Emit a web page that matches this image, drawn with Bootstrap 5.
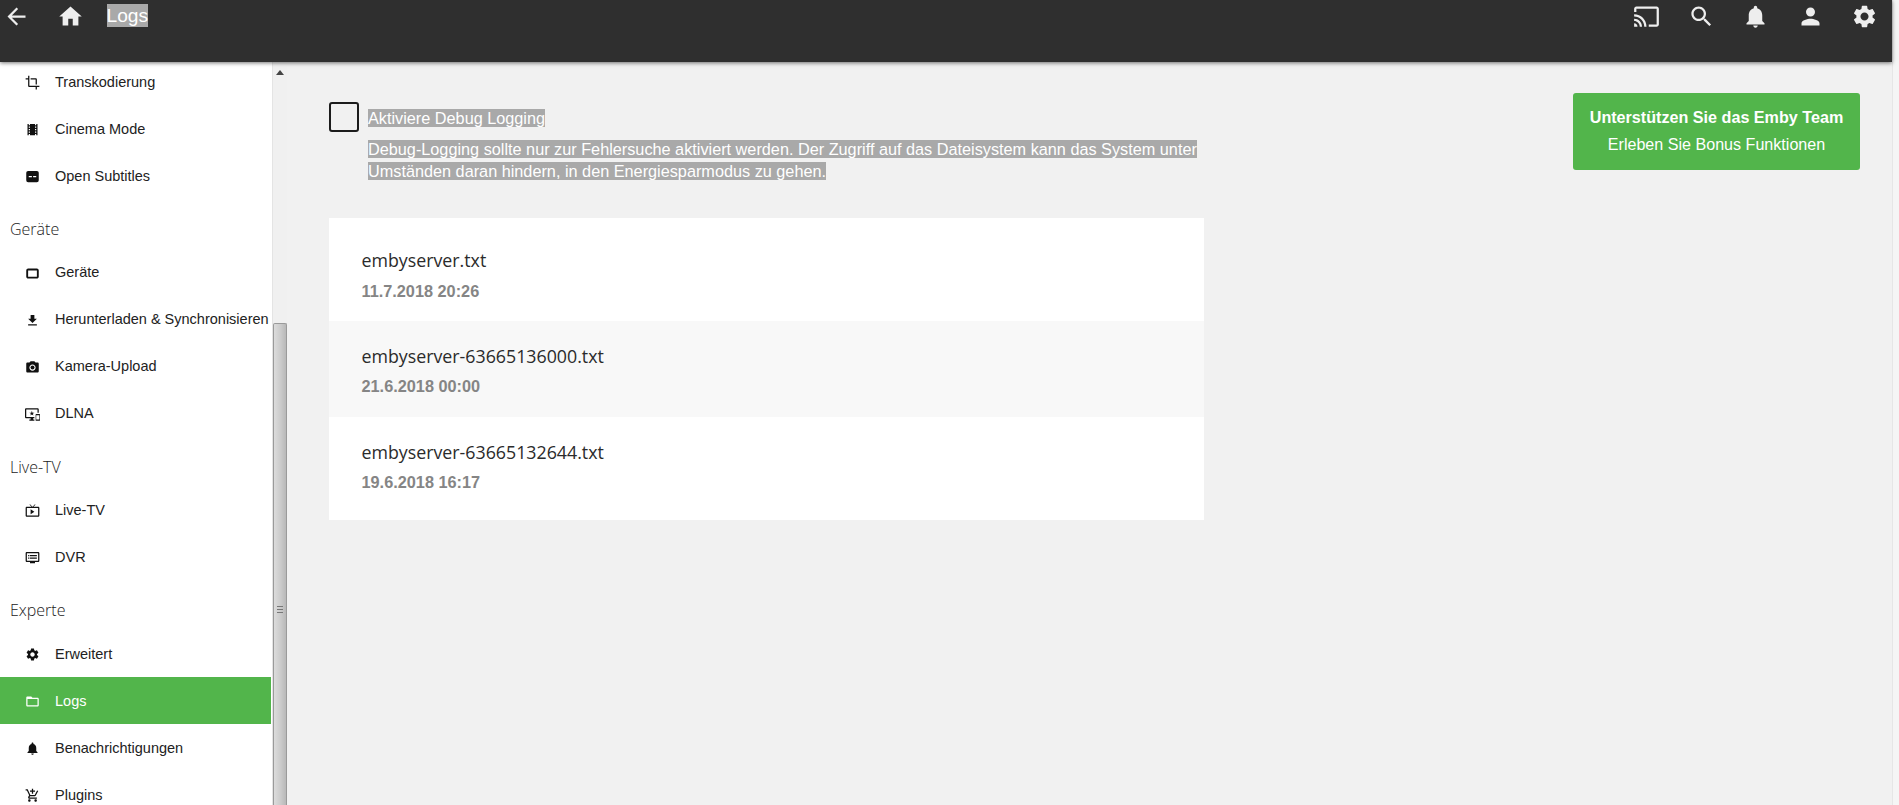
<!doctype html>
<html lang="de">
<head>
<meta charset="utf-8">
<title>Logs</title>
<link href="https://cdn.jsdelivr.net/npm/bootstrap@5.3.0/dist/css/bootstrap.min.css" rel="stylesheet">
<style>
html,body{height:100%;overflow:hidden}
body{background:#f1f1f1;font-family:"Liberation Sans",Arial,sans-serif;color:#222}
.page-shell{height:805px;width:1899px}
.page-col{width:1892px;min-width:1892px}
.edge-bar{width:7px;background:#f5f5f5;border-left:1px solid #e6e6e6}
.top-bar{height:62px;background:#2f2f2f;box-shadow:0 1px 4px rgba(0,0,0,.55);position:relative;z-index:3;color:#eee}
.top-btn{height:32px;width:54.5px;fill:#eee}
.top-btn svg{width:27px;height:27px}
.back-btn{width:33px}
.home-btn{margin-left:10px}
.home-btn svg{width:27px;height:27px}
.top-title{font-size:19.2px;line-height:23px;margin-top:4px;margin-left:9px;background:#a9a9a9;color:#fff;align-self:flex-start}
.side-panel{width:272px;background:#fff}
.side-inner{margin-top:-4px}
.side-item{height:47px;padding-left:24.5px;padding-top:2px;gap:15.5px;font-size:14.5px;color:#222;text-decoration:none}
.side-item svg{width:15px;height:15px;fill:#111;flex:none}
.side-item.is-active{background:#52b54b;color:#fff;width:271px}
.side-item.is-active svg{fill:#fff}
.side-head{font-family:"Open Sans",sans-serif;font-size:16px;color:#222;padding:19px 0 0 10px;margin:0;height:49.67px;line-height:22px;font-weight:300}
.sb-track{width:15px;background:#f0f0f0;border-left:1px solid #e4e4e4;position:relative}
.sb-arrow{width:0;height:0;border-left:4px solid transparent;border-right:4px solid transparent;border-bottom:5px solid #444;margin:8px auto 0}
.sb-thumb{position:absolute;left:0;right:0;top:261px;bottom:0;background:linear-gradient(90deg,#dcdcdc,#cbcbcb 55%,#b8b8b8);border:1px solid #9a9a9a;border-bottom:0;border-radius:2px 2px 0 0}
.sb-grip{position:absolute;left:3px;top:282px;width:6px;height:7px;border-top:1px solid #777;border-bottom:1px solid #777}
.sb-grip::after{content:"";display:block;margin-top:2px;border-top:1px solid #777}
.main-area{padding:31px 32px 0 42px}
.main-left{width:875px}
.check-box{width:30px;height:30px;border:2px solid #1c1c1c;border-radius:3px;flex:none;margin-top:9px;background:transparent;appearance:none;display:block}
.sel-text{background:#a9a9a9;color:#fff}
.check-text{margin-left:9px;padding-top:14px;padding-right:5px}
.check-label{font-size:16.25px;line-height:22px;margin-bottom:9px;display:block}
.check-desc{font-size:16.25px;line-height:22px;margin:0}
.file-list{margin-top:36px;background:#fff}
.file-row{padding:0 32.5px;display:flex;flex-direction:column;color:inherit;text-decoration:none}
.file-row.first{height:103px;padding-top:29px}
.file-row.alt{height:96px;padding-top:22px;background:#f8f8f8}
.file-row.last{height:103px;padding-top:22px}
.file-name{font-family:"Open Sans",sans-serif;font-size:17.8px;line-height:26px;color:#2b2b2b}
.file-date{font-size:16.3px;font-weight:700;line-height:20px;color:#858585;margin-top:7px}
.file-row.first .file-date{margin-top:8px}
.promo{width:287px;height:77px;background:#52b54b;border-radius:3px;color:#fff;text-decoration:none;padding-bottom:2px}
.promo b{font-size:16.15px;line-height:22px;margin-bottom:5px}
.promo span{font-size:16.1px;line-height:22px}
</style>
</head>
<body>
<div class="page-shell d-flex">
  <div class="page-col d-flex flex-column">
    <header class="top-bar d-flex align-items-start flex-shrink-0">
      <div class="top-btn back-btn d-flex align-items-center justify-content-center"><svg viewBox="0 0 24 24"><path d="M20 11H7.830l5.590-5.590L12 4l-8 8 8 8 1.410-1.410L7.830 13H20v-2z"/></svg></div>
      <div class="top-btn home-btn d-flex align-items-center justify-content-center"><svg viewBox="0 0 24 24"><path d="M10 20v-6h4v6h5v-8h3L12 3 2 12h3v8z"/></svg></div>
      <div class="top-title">Logs</div>
      <div class="ms-auto d-flex">
        <div class="top-btn d-flex align-items-center justify-content-center"><svg viewBox="0 0 24 24"><path d="M21 3H3c-1.100 0-2 .9-2 2v3h2V5h18v14h-7v2h7c1.100 0 2-.9 2-2V5c0-1.100-.9-2-2-2zM1 18v3h3c0-1.660-1.340-3-3-3zm0-4v2c2.760 0 5 2.240 5 5h2c0-3.870-3.130-7-7-7zm0-4v2c4.970 0 9 4.030 9 9h2c0-6.080-4.930-11-11-11z"/></svg></div>
        <div class="top-btn d-flex align-items-center justify-content-center"><svg viewBox="0 0 24 24"><path d="M15.500 14h-.79l-.28-.27C15.410 12.590 16 11.110 16 9.500 16 5.910 13.090 3 9.500 3S3 5.910 3 9.500 5.910 16 9.500 16c1.610 0 3.090-.59 4.230-1.570l.27.28v.79l5 4.990L20.490 19l-4.990-5zm-6 0C7.010 14 5 11.990 5 9.500S7.010 5 9.500 5 14 7.010 14 9.500 11.990 14 9.500 14z"/></svg></div>
        <div class="top-btn d-flex align-items-center justify-content-center"><svg viewBox="0 0 24 24"><path d="M12 22c1.100 0 2-.9 2-2h-4c0 1.100.89 2 2 2zm6-6v-5c0-3.070-1.640-5.640-4.500-6.320V4c0-.83-.67-1.500-1.500-1.500s-1.500.67-1.500 1.500v.68C7.630 5.360 6 7.920 6 11v5l-2 2v1h16v-1l-2-2z"/></svg></div>
        <div class="top-btn d-flex align-items-center justify-content-center"><svg viewBox="0 0 24 24"><path d="M12 12c2.210 0 4-1.790 4-4s-1.790-4-4-4-4 1.790-4 4 1.790 4 4 4zm0 2c-2.670 0-8 1.340-8 4v2h16v-2c0-2.660-5.330-4-8-4z"/></svg></div>
        <div class="top-btn d-flex align-items-center justify-content-center"><svg viewBox="0 0 24 24"><path d="M19.140 12.940c.04-.3.06-.61.06-.94 0-.32-.02-.64-.07-.94l2.030-1.580c.18-.14.23-.41.12-.61l-1.920-3.320c-.12-.22-.37-.29-.59-.22l-2.390.96c-.5-.38-1.030-.7-1.620-.94l-.36-2.540c-.04-.24-.24-.41-.48-.41h-3.840c-.24 0-.43.17-.47.41l-.36 2.540c-.59.24-1.130.57-1.620.94l-2.390-.96c-.22-.08-.47 0-.59.22L2.740 8.870c-.12.21-.08.47.12.61l2.030 1.580c-.05.3-.09.63-.09.94s.02.64.07.94l-2.030 1.580c-.18.14-.23.41-.12.61l1.920 3.320c.12.22.37.29.59.22l2.390-.96c.5.38 1.030.7 1.620.94l.36 2.540c.05.24.24.41.48.41h3.840c.24 0 .44-.17.47-.41l.36-2.540c.59-.24 1.130-.56 1.620-.94l2.390.96c.22.08.47 0 .59-.22l1.920-3.320c.12-.22.07-.47-.12-.61l-2.010-1.580zM12 15.600c-1.980 0-3.600-1.620-3.600-3.600s1.620-3.600 3.600-3.600 3.600 1.620 3.600 3.600-1.620 3.600-3.600 3.600z"/></svg></div>
      </div>
    </header>
    <div class="d-flex flex-grow-1 overflow-hidden">
      <nav class="side-panel flex-shrink-0 overflow-hidden">
        <div class="side-inner">
          <a class="side-item d-flex align-items-center" href="#"><svg viewBox="0 0 24 24"><path d="M17 15h2V7c0-1.100-.9-2-2-2H9v2h8v8zM7 17V1H5v4H1v2h4v10c0 1.100.9 2 2 2h10v4h2v-4h4v-2H7z"/></svg>Transkodierung</a>
          <a class="side-item d-flex align-items-center" href="#"><svg viewBox="0 0 24 24"><path d="M18 3v2h-2V3H8v2H6V3H4v18h2v-2h2v2h8v-2h2v2h2V3h-2zM8 17H6v-2h2v2zm0-4H6v-2h2v2zm0-4H6V7h2v2zm10 8h-2v-2h2v2zm0-4h-2v-2h2v2zm0-4h-2V7h2v2z"/></svg>Cinema Mode</a>
          <a class="side-item d-flex align-items-center" href="#"><svg viewBox="0 0 24 24"><path fill-rule="evenodd" d="M5 3h14a3 3 0 0 1 3 3v12a3 3 0 0 1-3 3H5a3 3 0 0 1-3-3V6a3 3 0 0 1 3-3zm1 8v2h5v-2H6zm7 0v2h5v-2h-5z"/></svg>Open Subtitles</a>
          <h2 class="side-head">Geräte</h2>
          <a class="side-item d-flex align-items-center" href="#"><svg viewBox="0 0 24 24"><path d="M19 4H5C3.500 4 2 5.500 2 7v10c0 1.500 1.500 3 3 3h14c1.500 0 3-1.500 3-3V7c0-1.500-1.500-3-3-3zm0 13H5V7h14v10z"/></svg>Geräte</a>
          <a class="side-item d-flex align-items-center" href="#"><svg viewBox="0 0 24 24"><path d="M19 9h-4V3H9v6H5l7 7 7-7zM5 18v2h14v-2H5z"/></svg>Herunterladen &amp; Synchronisieren</a>
          <a class="side-item d-flex align-items-center" href="#"><svg viewBox="0 0 24 24"><circle cx="12" cy="12" r="3.200"/><path d="M9 2L7.170 4H4c-1.100 0-2 .9-2 2v12c0 1.100.9 2 2 2h16c1.100 0 2-.9 2-2V6c0-1.100-.9-2-2-2h-3.170L15 2H9zm3 15c-2.760 0-5-2.240-5-5s2.240-5 5-5 5 2.240 5 5-2.240 5-5 5z"/></svg>Kamera-Upload</a>
          <a class="side-item d-flex align-items-center" href="#"><svg viewBox="0 0 24 24"><path d="M23 11.010L18 11c-.55 0-1 .45-1 1v9c0 .55.45 1 1 1h5c.55 0 1-.45 1-1v-9c0-.55-.45-.99-1-.99zM23 20h-5v-7h5v7zM20 2H2C.89 2 0 2.890 0 4v12c0 1.100.89 2 2 2h7v2H7v2h8v-2h-2v-2h2v-2H2V4h18v5h2V4c0-1.110-.9-2-2-2zm-8.030 7L11 6l-.97 3H7l2.470 1.760-.94 2.910 2.470-1.800 2.470 1.800-.94-2.910L15 9h-3.030z"/></svg>DLNA</a>
          <h2 class="side-head">Live-TV</h2>
          <a class="side-item d-flex align-items-center" href="#"><svg viewBox="0 0 24 24"><path d="M21 6h-7.590l3.290-3.290L16 2l-4 4-4-4-.71.71L10.590 6H3c-1.100 0-2 .89-2 2v12c0 1.100.9 2 2 2h18c1.100 0 2-.9 2-2V8c0-1.110-.9-2-2-2zm0 14H3V8h18v12zM9 10v8l6-4z"/></svg>Live-TV</a>
          <a class="side-item d-flex align-items-center" href="#"><svg viewBox="0 0 24 24"><path d="M21 3H3c-1.100 0-2 .9-2 2v12c0 1.100.9 2 2 2h5v2h8v-2h5c1.100 0 1.990-.9 1.990-2L23 5c0-1.100-.9-2-2-2zm0 14H3V5h18v12zm-2-9H8v2h11V8zm0 4H8v2h11v-2zM7 8H5v2h2V8zm0 4H5v2h2v-2z"/></svg>DVR</a>
          <h2 class="side-head">Experte</h2>
          <a class="side-item d-flex align-items-center" href="#"><svg viewBox="0 0 24 24"><path d="M19.140 12.940c.04-.3.06-.61.06-.94 0-.32-.02-.64-.07-.94l2.030-1.580c.18-.14.23-.41.12-.61l-1.920-3.320c-.12-.22-.37-.29-.59-.22l-2.390.96c-.5-.38-1.030-.7-1.620-.94l-.36-2.540c-.04-.24-.24-.41-.48-.41h-3.840c-.24 0-.43.17-.47.41l-.36 2.540c-.59.24-1.130.57-1.620.94l-2.390-.96c-.22-.08-.47 0-.59.22L2.740 8.870c-.12.21-.08.47.12.61l2.030 1.580c-.05.3-.09.63-.09.94s.02.64.07.94l-2.030 1.580c-.18.14-.23.41-.12.61l1.920 3.320c.12.22.37.29.59.22l2.390-.96c.5.38 1.030.7 1.620.94l.36 2.540c.05.24.24.41.48.41h3.840c.24 0 .44-.17.47-.41l.36-2.540c.59-.24 1.130-.56 1.620-.94l2.390.96c.22.08.47 0 .59-.22l1.920-3.320c.12-.22.07-.47-.12-.61l-2.010-1.580zM12 15.600c-1.980 0-3.600-1.620-3.600-3.600s1.620-3.600 3.600-3.600 3.600 1.620 3.600 3.600-1.620 3.600-3.600 3.600z"/></svg>Erweitert</a>
          <a class="side-item is-active d-flex align-items-center" href="#"><svg viewBox="0 0 24 24"><path d="M20 6h-8l-2-2H4c-1.100 0-1.990.9-1.990 2L2 18c0 1.100.9 2 2 2h16c1.100 0 2-.9 2-2V8c0-1.100-.9-2-2-2zm0 12H4V8h16v10z"/></svg>Logs</a>
          <a class="side-item d-flex align-items-center" href="#"><svg viewBox="0 0 24 24"><path d="M12 22c1.100 0 2-.9 2-2h-4c0 1.100.89 2 2 2zm6-6v-5c0-3.070-1.640-5.640-4.500-6.320V4c0-.83-.67-1.500-1.500-1.500s-1.500.67-1.500 1.500v.68C7.630 5.360 6 7.920 6 11v5l-2 2v1h16v-1l-2-2z"/></svg>Benachrichtigungen</a>
          <a class="side-item d-flex align-items-center" href="#"><svg viewBox="0 0 24 24"><path d="M11 9h2V6h3V4h-3V1h-2v3H8v2h3v3zm-4 9c-1.100 0-1.990.9-1.990 2S5.900 22 7 22s2-.9 2-2-.9-2-2-2zm10 0c-1.100 0-1.990.9-1.990 2s.89 2 1.990 2 2-.9 2-2-.9-2-2-2zm-9.830-3.250l.03-.12.9-1.630h7.450c.75 0 1.410-.41 1.750-1.030l3.860-7.010L19.420 4h-.01l-1.100 2-2.760 5H8.530l-.13-.27L6.160 6l-.95-2-.94-2H1v2h2l3.600 7.590-1.350 2.450c-.16.28-.25.61-.25.96 0 1.100.9 2 2 2h12v-2H7.420c-.13 0-.25-.11-.25-.25z"/></svg>Plugins</a>
        </div>
      </nav>
      <div class="sb-track flex-shrink-0"><div class="sb-arrow"></div><div class="sb-thumb"><div class="sb-grip"></div></div></div>
      <main class="main-area flex-grow-1 d-flex justify-content-between align-items-start">
        <div class="main-left">
          <div class="d-flex">
            <input class="check-box" type="checkbox" aria-label="Aktiviere Debug Logging">
            <div class="check-text">
              <label class="check-label"><span class="sel-text">Aktiviere Debug Logging</span></label>
              <p class="check-desc"><span class="sel-text">Debug-Logging sollte nur zur Fehlersuche aktiviert werden. Der Zugriff auf das Dateisystem kann das System unter Umständen daran hindern, in den Energiesparmodus zu gehen.</span></p>
            </div>
          </div>
          <div class="file-list">
            <a class="file-row first" href="#"><span class="file-name">embyserver.txt</span><span class="file-date">11.7.2018 20:26</span></a>
            <a class="file-row alt" href="#"><span class="file-name">embyserver-63665136000.txt</span><span class="file-date">21.6.2018 00:00</span></a>
            <a class="file-row last" href="#"><span class="file-name">embyserver-63665132644.txt</span><span class="file-date">19.6.2018 16:17</span></a>
          </div>
        </div>
        <a class="promo d-flex flex-column align-items-center justify-content-center" href="#"><b>Unterstützen Sie das Emby Team</b><span>Erleben Sie Bonus Funktionen</span></a>
      </main>
    </div>
  </div>
  <div class="edge-bar flex-shrink-0"></div>
</div>
<script src="https://cdn.jsdelivr.net/npm/bootstrap@5.3.0/dist/js/bootstrap.bundle.min.js"></script>
</body>
</html>
